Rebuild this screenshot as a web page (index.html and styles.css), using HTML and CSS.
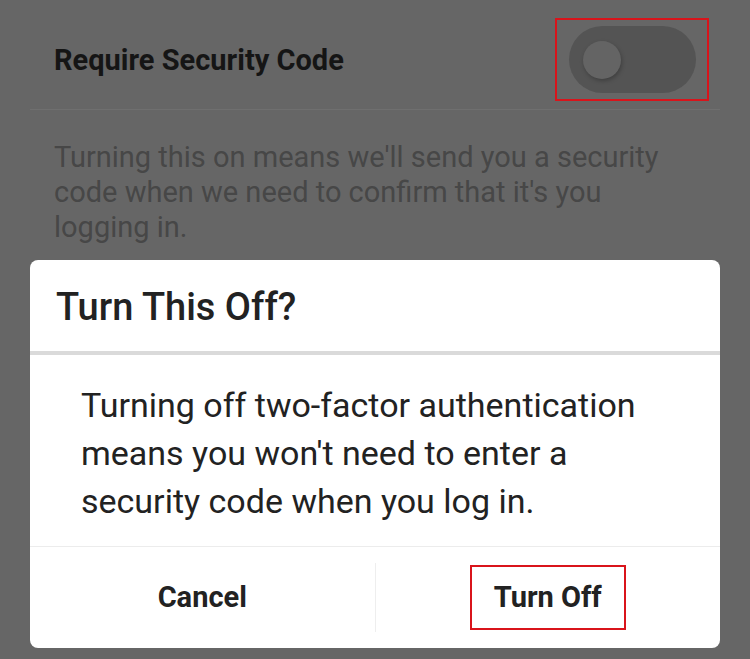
FILE: index.html
```html
<!DOCTYPE html>
<html lang="en">
<head>
  <meta charset="UTF-8" />
  <title>Require Security Code</title>
  <meta name="viewport" content="width=device-width, initial-scale=1" />
  <link rel="stylesheet" href="styles.css">
</head>
<body>
  <div class="settings">
    <div class="setting-row">
      <span class="setting-label">Require Security Code</span>
      <div class="highlight toggle-box">
        <div class="toggle">
          <div class="knob"></div>
        </div>
      </div>
    </div>
    <p class="setting-desc">Turning this on means we'll send you a security code when we need to confirm that it's you logging in.</p>
  </div>

  <div class="dialog">
    <h2 class="dialog-title">Turn This Off?</h2>
    <p class="dialog-body">Turning off two-factor authentication means you won't need to enter a security code when you log in.</p>
    <div class="dialog-actions">
      <button class="action">Cancel</button>
      <div class="action-divider"></div>
      <button class="action"><span class="highlight">Turn Off</span></button>
    </div>
  </div>
</body>
</html>
```

FILE: styles.css
```css
body {
  margin: 0;
  width: 750px;
  height: 659px;
  overflow: hidden;
  background: #666666;
  font-family: Roboto, "Noto Sans", sans-serif;
}
.settings {
  padding: 0 30px;
  height: 260px;
}
.setting-row {
  display: flex;
  justify-content: space-between;
  align-items: center;
  padding: 18px 11px 8px 24px;
  border-bottom: 1px solid #6f6f6f;
}
.setting-label {
  font-size: 29px;
  line-height: 34px;
  font-weight: 700;
  color: #151515;
}
.highlight {
  border: 2px solid #d9141b;
}
.toggle-box {
  width: 154px;
  height: 83px;
  display: flex;
  align-items: center;
  justify-content: center;
  box-sizing: border-box;
}
.toggle {
  width: 127px;
  height: 67px;
  border-radius: 34px;
  background: #545454;
  display: flex;
  align-items: center;
  padding-left: 14px;
  box-sizing: border-box;
}
.knob {
  width: 38px;
  height: 38px;
  border-radius: 50%;
  background: #646464;
  box-shadow: 1px 2px 4px rgba(0,0,0,0.25);
}
.setting-desc {
  margin: 30px 0 0;
  padding: 0 24px;
  font-size: 29px;
  line-height: 35px;
  color: #474747;
}
.dialog {
  margin: 0 30px;
  background: #fff;
  border-radius: 8px;
  height: 388px;
  display: flex;
  flex-direction: column;
}
.dialog-title {
  margin: 0;
  padding: 4px 26px 0;
  line-height: 87px;
  font-size: 38px;
  font-weight: 500;
  color: #222;
  border-bottom: 4px solid #dadada;
}
.dialog-body {
  margin: 0;
  padding: 26px 51px 21px;
  font-size: 34px;
  line-height: 48px;
  color: #222;
  border-bottom: 1px solid #ececec;
}
.dialog-actions {
  flex: 1;
  display: flex;
  align-items: center;
}
.action {
  flex: 1;
  background: none;
  border: none;
  font-family: inherit;
  font-size: 29px;
  line-height: 35px;
  font-weight: 700;
  color: #222;
  padding: 0;
  display: flex;
  justify-content: center;
}
.action .highlight {
  padding: 13px 22px;
}
.action-divider {
  width: 1px;
  height: 69px;
  background: #eeeeee;
}
```
